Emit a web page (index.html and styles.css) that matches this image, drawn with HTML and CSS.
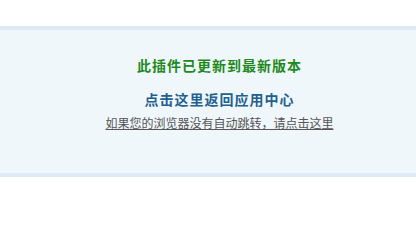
FILE: index.html
```html
<!DOCTYPE html>
<html lang="zh-CN">
<head>
<meta charset="utf-8">
<title>插件已更新</title>
<link rel="stylesheet" href="styles.css">
</head>
<body>
<div class="top"></div>
<div class="panel">
  <p class="msg">此插件已更新到最新版本</p>
  <p class="back"><a href="#">点击这里返回应用中心</a></p>
  <p class="hint"><a href="#">如果您的浏览器没有自动跳转，请点击这里</a></p>
</div>
</body>
</html>
```
FILE: styles.css
```css
html, body {
  margin: 0;
  padding: 0;
  background: #ffffff;
  font-family: "Noto Sans CJK SC", "Noto Sans", sans-serif;
}
.top {
  height: 26px;
}
.panel {
  box-sizing: border-box;
  height: 151px;
  background: #f0f7fb;
  border-top: 4px solid #ddeaf5;
  border-bottom: 4px solid #ddeaf5;
  padding-top: 25px;
  padding-left: 23px;
  text-align: center;
}
.panel p {
  margin: 0;
}
.msg {
  font-size: 14px;
  letter-spacing: 1px;
  line-height: 20px;
  font-weight: bold;
  color: #1e8a1e;
}
.back {
  margin-top: 14px !important;
  font-size: 14px;
  letter-spacing: 1px;
  line-height: 20px;
  font-weight: bold;
}
.back a {
  color: #235f8f;
  text-decoration: none;
}
.hint {
  margin-top: 6px !important;
  font-size: 12px;
  line-height: 16px;
}
.hint a {
  color: #555555;
  text-decoration: underline;
}
```
